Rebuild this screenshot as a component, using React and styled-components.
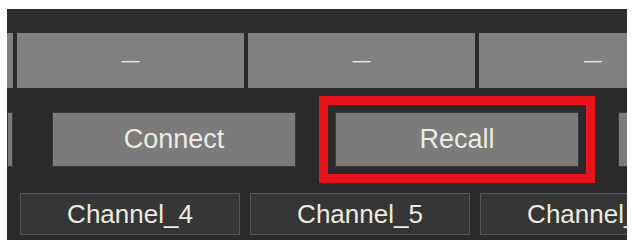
import React from 'react';
import styled, { createGlobalStyle } from 'styled-components';

const Global = createGlobalStyle`
  html, body {
    margin: 0;
    background: #ffffff;
  }
  body {
    font-family: "Liberation Sans", Arial, sans-serif;
  }
`;

const Panel = styled.div`
  margin: 9px 0 0 7px;
  width: 620px;
  height: 231px;
  background: #2b2a2a;
  overflow: hidden;
  display: flex;
  flex-direction: column;
`;

const TopBar = styled.div`
  height: 24px;
  background: #2e2e2e;
`;

const ValueRow = styled.div`
  height: 55px;
  display: flex;
  gap: 4px;
  flex-shrink: 0;
`;

const ValueCell = styled.div`
  flex: 0 0 ${p => p.w}px;
  height: 100%;
  background: #808080;
  color: #eeeeee;
  font-size: 18px;
  display: flex;
  align-items: center;
  justify-content: ${p => (p.edge ? 'flex-end' : 'center')};
  padding-right: ${p => (p.edge ? '27px' : '0')};
  box-sizing: border-box;
`;

const ButtonRow = styled.div`
  display: flex;
  gap: 39px;
  padding: 24px 0 26px;
  flex-shrink: 0;
`;

const Button = styled.div`
  flex: 0 0 ${p => p.w || 244}px;
  height: 55px;
  box-sizing: border-box;
  background: #7b7b7b;
  border: 1px solid #3a3a3a;
  color: #ecebe0;
  font-size: 27px;
  display: flex;
  align-items: center;
  justify-content: center;
  ${p => p.highlight && `
    outline: 9px solid #e8141c;
    outline-offset: 7px;
  `}
`;

const ChannelRow = styled.div`
  display: flex;
  gap: 10px;
  padding-left: 13px;
  height: 42px;
  flex-shrink: 0;
`;

const Channel = styled.div`
  flex: 0 0 220px;
  box-sizing: border-box;
  border: 1px solid #555555;
  background: #363636;
  color: #ecebe0;
  font-size: 26px;
  display: flex;
  align-items: center;
  justify-content: center;
  white-space: nowrap;
`;

export default function App() {
  return (
    <>
      <Global />
      <Panel>
        <TopBar />
        <ValueRow>
          <ValueCell w={6} />
          <ValueCell w={227}>—</ValueCell>
          <ValueCell w={227}>—</ValueCell>
          <ValueCell w={150} edge>—</ValueCell>
        </ValueRow>
        <ButtonRow>
          <Button w={6} />
          <Button>Connect</Button>
          <Button highlight>Recall</Button>
          <Button w={10} />
        </ButtonRow>
        <ChannelRow>
          <Channel>Channel_4</Channel>
          <Channel>Channel_5</Channel>
          <Channel>Channel_6</Channel>
        </ChannelRow>
      </Panel>
    </>
  );
}
